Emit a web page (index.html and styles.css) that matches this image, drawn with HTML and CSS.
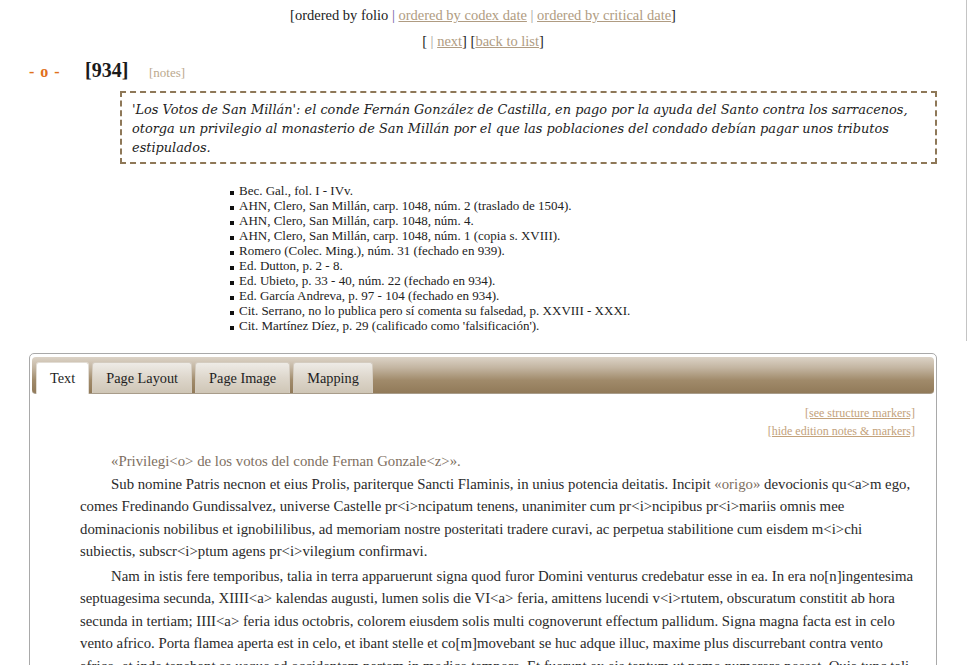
FILE: index.html
```html
<!DOCTYPE html>
<html lang="es">
<head>
<meta charset="utf-8">
<title>[934] Los Votos de San Millán</title>
<link rel="stylesheet" href="styles.css">
</head>
<body>
<div class="top">
  <p class="nav">[ordered by folio <span class="sep-v">|</span> <a href="#">ordered by codex date</a> <span class="sep">|</span> <a href="#">ordered by critical date</a>]</p>
  <p class="nav nav2">[ <span class="sep">|</span> <a href="#">next</a>] [<a href="#">back to list</a>]</p>
  <div class="head">
    <span class="mark">- o -</span>
    <span class="num">[934]</span>
    <span class="notes">[notes]</span>
  </div>
  <div class="summary">'Los Votos de San Millán': el conde Fernán González de Castilla, en pago por la ayuda del Santo contra los sarracenos, otorga un privilegio al monasterio de San Millán por el que las poblaciones del condado debían pagar unos tributos estipulados.</div>
  <ul class="sources">
    <li>Bec. Gal., fol. I - IVv.</li>
    <li>AHN, Clero, San Millán, carp. 1048, núm. 2 (traslado de 1504).</li>
    <li>AHN, Clero, San Millán, carp. 1048, núm. 4.</li>
    <li>AHN, Clero, San Millán, carp. 1048, núm. 1 (copia s. XVIII).</li>
    <li>Romero (Colec. Ming.), núm. 31 (fechado en 939).</li>
    <li>Ed. Dutton, p. 2 - 8.</li>
    <li>Ed. Ubieto, p. 33 - 40, núm. 22 (fechado en 934).</li>
    <li>Ed. García Andreva, p. 97 - 104 (fechado en 934).</li>
    <li>Cit. Serrano, no lo publica pero sí comenta su falsedad, p. XXVIII - XXXI.</li>
    <li>Cit. Martínez Díez, p. 29 (calificado como 'falsificación').</li>
  </ul>
</div>
<div class="panel">
  <div class="tabbar">
    <a class="tab active" href="#">Text</a>
    <a class="tab" href="#">Page Layout</a>
    <a class="tab" href="#">Page Image</a>
    <a class="tab" href="#">Mapping</a>
  </div>
  <div class="content">
    <div class="markers">
      <a href="#">[see structure markers]</a>
      <a href="#">[hide edition notes &amp; markers]</a>
    </div>
    <p class="para title">«Privilegi&lt;o&gt; de los votos del conde Fernan Gonzale&lt;z&gt;».</p>
    <p class="para">Sub nomine Patris necnon et eius Prolis, pariterque Sancti Flaminis, in unius potencia deitatis. Incipit <span class="ed">«origo»</span> devocionis qu&lt;a&gt;m ego, comes Fredinando Gundissalvez, universe Castelle pr&lt;i&gt;ncipatum tenens, unanimiter cum pr&lt;i&gt;ncipibus pr&lt;i&gt;mariis omnis mee dominacionis nobilibus et ignobililibus, ad memoriam nostre posteritati tradere curavi, ac perpetua stabilitione cum eisdem m&lt;i&gt;chi subiectis, subscr&lt;i&gt;ptum agens pr&lt;i&gt;vilegium confirmavi.</p>
    <p class="para">Nam in istis fere temporibus, talia in terra apparuerunt signa quod furor Domini venturus credebatur esse in ea. In era no[n]ingentesima septuagesima secunda, XIIII&lt;a&gt; kalendas augusti, lumen solis die VI&lt;a&gt; feria, amittens lucendi v&lt;i&gt;rtutem, obscuratum constitit ab hora secunda in tertiam; IIII&lt;a&gt; feria idus octobris, colorem eiusdem solis multi cognoverunt effectum pallidum. Signa magna facta est in celo vento africo. Porta flamea aperta est in celo, et ibant stelle et co[m]movebant se huc adque illuc, maxime plus discurrebant contra vento africo, et inde tenebant se usque ad occidentem partem in modico tempore. Et fuerunt ex eis tantum ut nemo numerare posset. Quia tunc tali tempore Abderrahman rex Cordube et totius Ispanie ingressus est.</p>
  </div>
</div>
</body>
</html>
```

FILE: styles.css
```css
html, body {
  margin: 0;
  padding: 0;
  background: #ffffff;
}

body {
  font-family: "Liberation Serif", "Times New Roman", serif;
  color: #222222;
}

a {
  color: #b09c82;
}

.top {
  margin-right: 2px;
  border-right: 1px solid #c4c4c4;
  padding: 7px 29px 8px 29px;
}

.nav {
  margin: 0;
  text-align: center;
  font-size: 14.5px;
  line-height: 16px;
  color: #222222;
}

.nav2 {
  margin-top: 10px;
}

.sep-v {
  color: #6a5a9a;
}

.sep {
  color: #9a9a9a;
}

.head {
  margin-top: 11px;
  display: flex;
  align-items: baseline;
  height: 20px;
  line-height: 20px;
}

.mark {
  color: #e0701c;
  font-weight: bold;
  font-size: 16px;
  width: 56px;
  letter-spacing: 1px;
}

.num {
  font-weight: bold;
  font-size: 20px;
  color: #1a1a1a;
  width: 64px;
}

.notes {
  font-size: 13px;
  color: #bba98e;
}

.summary {
  margin: 11px 0 0 91px;
  border: 2px dashed #8e7858;
  padding: 7px 10px 5px 10px;
  font-family: "DejaVu Serif", serif;
  font-style: italic;
  font-size: 12.9px;
  line-height: 19px;
  color: #222222;
}

.sources {
  list-style: none;
  margin: 19px 0 0 0;
  padding: 0 0 0 210px;
  font-size: 13px;
  line-height: 15px;
  color: #222222;
}

.sources li::before {
  content: "";
  display: inline-block;
  width: 4px;
  height: 4px;
  background: #111111;
  margin: 0 5px 0 -9px;
  vertical-align: baseline;
}

.panel {
  margin: 12px 32px 0 29px;
  border: 1px solid #a9a9a9;
  border-radius: 5px;
  padding: 3px 2px 0 2px;
}

.tabbar {
  display: flex;
  gap: 3px;
  padding: 5px 3px 0 4px;
  border-radius: 4px;
  border-bottom: 1px solid #a89c8a;
  background: linear-gradient(#dcd3c7 0%, #c3b5a1 30%, #a08a6a 65%, #917a59 100%);
}

.tab {
  display: block;
  height: 30px;
  line-height: 30px;
  padding: 0 13px;
  border: 1px solid #d4ccc0;
  border-bottom: none;
  border-radius: 3px 3px 0 0;
  background: linear-gradient(#eeebe6 0%, #ddd6cb 50%, #cfc6b6 100%);
  color: #1e1e1e;
  text-decoration: none;
  font-size: 14.3px;
  margin-bottom: -1px;
}

.tab.active {
  background: #ffffff;
  border-color: #e2ddd5;
  height: 31px;
}

.content {
  padding: 10px 19px 0 48px;
}

.markers {
  display: flex;
  flex-direction: column;
  align-items: flex-end;
  font-size: 12px;
  line-height: 18px;
}

.markers a {
  display: block;
  height: 18px;
  color: #c3a27b;
}

.para {
  margin: 0;
  font-size: 14.8px;
  line-height: 22.5px;
  text-indent: 31px;
  color: #2a2a2a;
}

.title {
  margin-top: 10px;
  color: #7e6f5f;
}

.para + .para + .para {
  margin-top: 2px;
}

.ed {
  color: #7e6f5f;
}
```
